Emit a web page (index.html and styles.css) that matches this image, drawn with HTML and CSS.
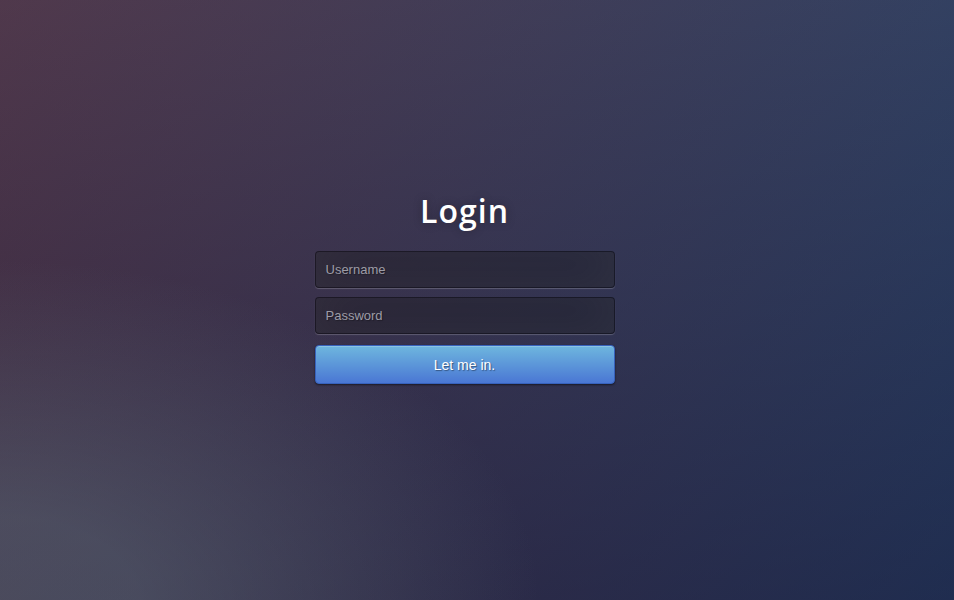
FILE: index.html
```html
<!DOCTYPE html>
<html>
<head>
<meta charset="utf-8">
<link rel="stylesheet" href="styles.css">
</head>
<body>
<div class="page">
  <form class="login">
    <h1 class="title">Login</h1>
    <input class="field" type="text" placeholder="Username">
    <input class="field" type="password" placeholder="Password">
    <button class="btn" type="button">Let me in.</button>
  </form>
</div>
</body>
</html>
```
FILE: styles.css
```css
html, body {
  margin: 0;
  padding: 0;
  height: 100%;
}
body {
  background-color: #092756;
  background-image:
    radial-gradient(ellipse at 0% 100%, rgba(104,128,138,.4) 10%, rgba(138,114,76,0) 40%),
    linear-gradient(to bottom, rgba(57,173,219,.25) 0%, rgba(42,60,87,.4) 100%),
    linear-gradient(135deg, #670d10 -25%, #092756 125%);
  background-repeat: no-repeat;
  background-size: 100% 100%;
  font-family: "Liberation Sans", Arial, sans-serif;
  overflow: hidden;
}
.page {
  height: 600px;
  display: flex;
  justify-content: center;
  padding-right: 25px;
  box-sizing: border-box;
}
.login {
  width: 300px;
  margin-top: 187px;
  display: flex;
  flex-direction: column;
}
.title {
  margin: 0 0 16px 0;
  font-family: "Open Sans", sans-serif;
  font-weight: 600;
  font-size: 32px;
  line-height: 48px;
  color: #fff;
  text-align: center;
  letter-spacing: 1px;
  text-shadow: 0 0 10px rgba(0,0,0,0.3);
}
.field {
  box-sizing: border-box;
  width: 300px;
  height: 37px;
  margin: 0 0 9px 0;
  padding: 10px;
  font-family: "Liberation Sans", Arial, sans-serif;
  font-size: 13px;
  color: #fff;
  background: rgba(0,0,0,0.3);
  border: 1px solid rgba(0,0,0,0.3);
  border-radius: 4px;
  outline: none;
  text-shadow: 1px 1px 1px rgba(0,0,0,0.3);
  box-shadow: inset 0 -5px 45px rgba(100,100,100,0.2), 0 1px 1px rgba(255,255,255,0.2);
}
.field::placeholder {
  color: #9d9ca6;
}
.btn {
  box-sizing: border-box;
  width: 300px;
  height: 39px;
  margin-top: 2px;
  font-family: "Liberation Sans", Arial, sans-serif;
  font-size: 14px;
  color: #fff;
  text-shadow: 1px 1px 1px rgba(0,0,0,0.4);
  background-color: #4a77d4;
  background-image: linear-gradient(to bottom, #6eb6de, #4a77d4);
  border: 1px solid #3762bc;
  border-radius: 4px;
  box-shadow: inset 0 1px 0 rgba(255,255,255,0.2), 0 1px 2px rgba(0,0,0,0.5);
  cursor: pointer;
}
```
